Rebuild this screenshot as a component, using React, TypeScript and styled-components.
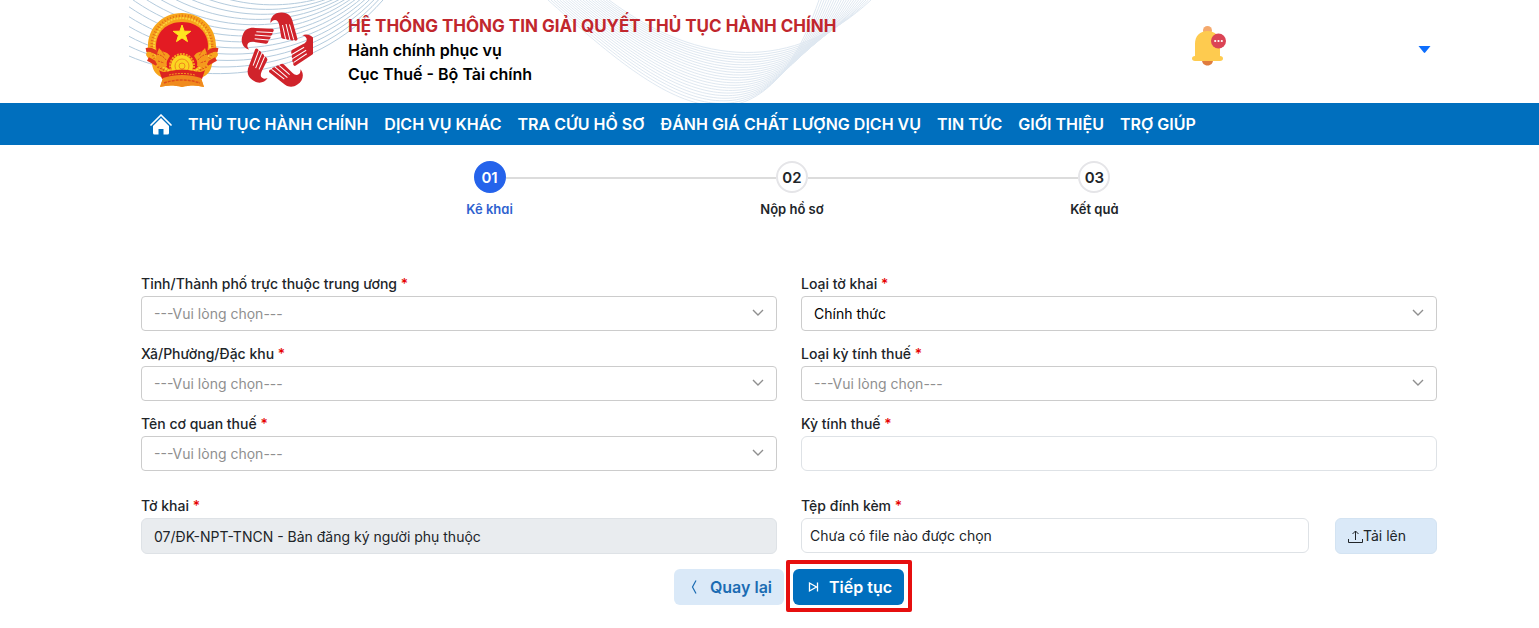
import React, { useId } from 'react';
import styled, { createGlobalStyle, css } from 'styled-components';

const GlobalStyle = createGlobalStyle`
  *, *::before, *::after { box-sizing: border-box; }
  body {
    margin: 0;
    background: #fff;
    color: #212529;
    font-family: Inter, "Noto Sans", sans-serif;
    font-size: 14px;
    line-height: 24px;
  }
  button, input, select { font: inherit; color: inherit; }
`;

const Container = styled.div`
  width: 100%;
  max-width: 1449px;
  padding: 0 12px 0 141px;
`;

const Header = styled.header`
  position: relative;
  overflow: hidden;
`;

const Pattern = styled.svg`
  position: absolute;
  top: 0;
  left: 129px;
  pointer-events: none;
`;

const HeaderRow = styled(Container)`
  position: relative;
  display: flex;
  align-items: center;
  padding-top: 12px;
  padding-bottom: 15px;
  padding-left: 145px;
`;

const Logos = styled.div`
  display: flex;
  align-items: center;
  gap: 22px;
  margin-right: 35px;
`;

const Titles = styled.div`
  flex: 1;
  font-size: 16px;
  font-weight: 600;
  color: #000;
`;

const SiteName = styled.h1`
  margin: 0;
  font-size: 17px;
  line-height: 24px;
  font-weight: 700;
  color: #c1272d;
`;

const TitleLine = styled.p`
  margin: 0;
`;

const IconButton = styled.button`
  display: flex;
  padding: 0;
  border: 0;
  background: none;
  cursor: pointer;
`;

const UserTools = styled.div`
  display: flex;
  align-items: center;
  gap: 191px;
  padding-right: 6px;
`;

const BellButton = styled(IconButton)`
  padding-bottom: 8px;
`;

const Nav = styled.nav`
  background: #006fbe;
  color: #fff;
`;

const NavList = styled(Container).attrs({ as: 'ul' })`
  display: flex;
  align-items: center;
  gap: 16px;
  height: 42px;
  margin: 0;
  padding-left: 150px;
  list-style: none;
`;

const NavLink = styled.a`
  display: flex;
  color: inherit;
  font-size: 16px;
  font-weight: 600;
  white-space: nowrap;
  text-decoration: none;
`;

const Steps = styled.ol`
  display: grid;
  grid-template-columns: repeat(3, 1fr);
  width: 70%;
  margin: 0 0 0 calc(15% + 3px);
  padding: 16px 0 0;
  list-style: none;
`;

const Step = styled.li<{ $active?: boolean }>`
  position: relative;
  display: flex;
  flex-direction: column;
  align-items: center;
  gap: 4px;
  font-size: 13px;
  font-weight: 600;
  font-feature-settings: 'cv11';
  color: ${p => (p.$active ? '#2f62cf' : '#212529')};

  &:not(:first-child)::before {
    content: '';
    position: absolute;
    top: 16px;
    right: calc(50% + 16px);
    width: calc(100% - 32px);
    height: 2px;
    background: #dcdcdc;
  }
`;

const StepNumber = styled.span<{ $active?: boolean }>`
  display: flex;
  align-items: center;
  justify-content: center;
  width: 32px;
  height: 32px;
  padding-top: 2px;
  border: 2px solid ${p => (p.$active ? '#2563eb' : '#e5e5e8')};
  border-radius: 50%;
  background: ${p => (p.$active ? '#2563eb' : '#fff')};
  color: ${p => (p.$active ? '#fff' : '#212529')};
  font-size: 15px;
  font-weight: 600;
`;

const Form = styled.form`
  padding-top: 51px;
`;

const FormGrid = styled.div<{ $last?: boolean }>`
  display: grid;
  grid-template-columns: 1fr 1fr;
  gap: 11px 24px;
  ${p => p.$last && css`margin-top: 23px;`}
`;

const Label = styled.label`
  display: block;
  font-weight: 500;
`;

const Required = styled.span`
  color: #e60000;
`;

const control = css`
  display: block;
  width: 100%;
  height: 35px;
  border: 1px solid #ccc;
  border-radius: 4px;
  background: #fff;
  outline-offset: 1px;
`;

const SelectBox = styled.div`
  position: relative;
`;

const Select = styled.select<{ $placeholder?: boolean }>`
  ${control}
  appearance: none;
  padding: 0 32px 0 12px;
  color: ${p => (p.$placeholder ? '#8f8f8f' : '#000')};
`;

const Chevron = styled.svg`
  position: absolute;
  top: 11px;
  right: 13px;
  pointer-events: none;
`;

const TextInput = styled.input<{ $file?: boolean }>`
  ${control}
  padding: 0 ${p => (p.$file ? 8 : 12)}px;
  border-color: #dee2e6;
  border-radius: 6px;
  &:disabled {
    height: 36px;
    background: #e9ecef;
    color: #212529;
    opacity: 1;
  }
`;

const FileRow = styled.div`
  display: flex;
  gap: 26px;
`;

const UploadButton = styled.button`
  flex: 0 0 102px;
  display: flex;
  align-items: center;
  height: 36px;
  padding: 0 12px;
  border: 1px solid #d3e3f2;
  border-radius: 6px;
  background: #dae9f8;
  cursor: pointer;
`;

const Actions = styled.div`
  display: flex;
  justify-content: center;
  gap: 9px;
  padding: 15px 0 23px;
`;

const ActionButton = styled.button<{ $primary?: boolean }>`
  display: flex;
  align-items: center;
  gap: 8px;
  height: 36px;
  padding: 0 12px;
  border: 0;
  border-radius: 6px;
  background: ${p => (p.$primary ? '#006fbe' : '#dae9f8')};
  color: ${p => (p.$primary ? '#fff' : '#1b6cb3')};
  font-size: 16px;
  font-weight: 600;
  white-space: nowrap;
  cursor: pointer;
`;

const Highlight = styled.div`
  position: relative;
  &::after {
    content: '';
    position: absolute;
    inset: -9px -8px -7px -7px;
    border: 4px solid #e60f0f;
    border-radius: 2px;
    pointer-events: none;
  }
`;

type Curve = number[];

function blend(a: Curve, b: Curve, count: number): string[] {
  return Array.from({ length: count }, (_, i) => {
    const t = i / (count - 1);
    const p = a.map((v, k) => Math.round((v + (b[k] - v) * t) * 10) / 10);
    return `M${p[0]} ${p[1]}C${p[2]} ${p[3]} ${p[4]} ${p[5]} ${p[6]} ${p[7]}`;
  });
}

const arcs = blend([0, 56, 70, 86, 180, 84, 254, 0], [0, -62, 70, 12, 150, 14, 205, -6], 13);
const wave = blend([419, 0, 521, 90, 626, 185, 690, 0], [480, 0, 571, 68, 665, 72, 742, 0], 22);

function HeaderPattern() {
  return (
    <Pattern width="780" height="103" fill="none" aria-hidden="true">
      <g stroke="#b4cbdd">
        {arcs.map(d => <path key={d} d={d} />)}
      </g>
      <g stroke="#dfe8f1">
        {wave.map(d => <path key={d} d={d} />)}
      </g>
    </Pattern>
  );
}

function Emblem() {
  return (
    <svg width="74" height="76" viewBox="0 0 74 76" role="img" aria-label="Quốc huy">
      <path d="M37 1C16 1 3 17 3 34L1 43l6 9c1 7 4 11 11 14l-3 9c7-2 14-2 22 0 8-2 15-2 22 0l-3-9c7-3 10-7 11-14l6-9-2-9C71 16 57 1 37 1Z" fill="#f7a51c" />
      <circle cx="37" cy="34" r="30" fill="none" stroke="#e2701a" strokeWidth="3" strokeDasharray="1 2" />
      <circle cx="37" cy="34" r="28" fill="none" stroke="#fbd13a" strokeWidth="2" strokeDasharray="2 1" />
      <path d="M37 10C21 10 11 21 11 34c0 10 7 19 13 23h26c6-4 13-13 13-23C63 21 53 10 37 10Z" fill="#e31b23" />
      <path d="m37 13 2.200 6.200 6.600.1-5.300 4 2 6.300-5.500-3.700-5.500 3.700 2-6.300-5.300-4 6.600-.1Z" fill="#ffe51f" stroke="#ffe51f" />
      <path d="M1 38c5-1 9 1 13 5M73 38c-5-1-9 1-13 5M3 47l9 5M71 47l-9 5" stroke="#e0321f" strokeWidth="4" fill="none" />
      <path d="M14 36c3 5 8 3 11 8-2 3-4 5-3 10-6 3-10 0-12-6M60 36c-3 5-8 3-11 8 2 3 4 5 3 10 6 3 10 0 12-6" fill="#f59a1d" />
      <path d="M12 42c4 1 7 3 9 6M13 49l6 2M62 42c-4 1-7 3-9 6M61 49l-6 2M17 39l3 5M57 39l-3 5M12 55l7 3M62 55l-7 3" stroke="#df4b1c" fill="none" strokeDasharray="2 1" />
      <circle cx="37" cy="54" r="11" fill="#fbd521" />
      <circle cx="37" cy="54" r="7" fill="none" stroke="#f08a1d" />
      <circle cx="37" cy="54" r="3" fill="none" stroke="#f08a1d" />
      <circle cx="37" cy="54" r="12" fill="none" stroke="#f7a51c" strokeWidth="2" strokeDasharray="2 1" />
      <path d="M14 58c4 3 7 2 11 1 8-2 16-2 24 0 4 1 7 2 11-1l-3 9c-13-4-27-4-40 0Z" fill="#dc2420" />
      <path d="M24 63c8-2 18-2 26 0" stroke="#f59a1d" strokeDasharray="2 1" fill="none" />
      <path d="M18 66c12-4 26-4 38 0l3 9c-7-2-14-2-22 0-8-2-15-2-22 0Z" fill="#f08a1d" />
      <path d="M19 71c11-4 25-4 36 0" stroke="#e0521c" strokeWidth="1.500" strokeDasharray="3 1" fill="none" />
    </svg>
  );
}

function HandsLogo() {
  return (
    <svg width="72" height="76" viewBox="-37 -39 72 76" role="img" aria-label="Hành chính phục vụ">
      {[0, 72, 144, 216, 288].map(angle => (
        <g key={angle} transform={`rotate(${angle})`}>
          <path
            d="M-7.500-28C-8-34-3-39 4-38.500 10-38.500 13.500-35 14.800-29L19.500-12C19.500-10 16.500-9.800 16-11.500 15-10 12.500-10.300 12-12 11-10.800 8.500-11 8-12.800 7-11.500 3.500-12 3.200-14L1.200-26C.5-29.500-1-31-3-31-5-31-6-30-7.500-28Z"
            fill="#d0232b"
          />
          <path d="m4.500-26 3 13.500M8-27l3.800 15.500M11.500-26.500l4.200 15" stroke="#fff" fill="none" />
        </g>
      ))}
    </svg>
  );
}

function BellIcon() {
  return (
    <svg width="36" height="40" viewBox="0 0 36 40" aria-hidden="true">
      <circle cx="16.500" cy="4.500" r="4.500" fill="#f5a96c" />
      <path d="M11 34h11c0 3-2 5.500-5.500 5.500S11 37 11 34Z" fill="#e07c3e" />
      <path d="M4 30V18C4 10 9 5 16.500 5S29 10 29 18v12c4 0 4 5 0 5H4c-4 0-4-5 0-5Z" fill="#fecb4f" />
      <circle cx="27.500" cy="15" r="7.500" fill="#db4455" />
      <g fill="#fff">
        <circle cx="24.200" cy="15" r="1.100" />
        <circle cx="27.500" cy="15" r="1.100" />
        <circle cx="30.800" cy="15" r="1.100" />
      </g>
    </svg>
  );
}

function HomeIcon() {
  return (
    <svg width="22" height="22" viewBox="0 0 22 22" aria-hidden="true">
      <path d="m1 12 10-10 10 10" fill="none" stroke="#fff" strokeWidth="1.700" strokeLinecap="round" strokeLinejoin="round" />
      <path d="m11 5 8 8v7a1.500 1.500 0 0 1-1.500 1.500H13.500V16h-5v5.500H4.500A1.500 1.500 0 0 1 3 20v-7Z" fill="#fff" />
    </svg>
  );
}

function LabelText({ id, children }: { id: string; children: React.ReactNode }) {
  return <Label htmlFor={id}>{children} <Required>*</Required></Label>;
}

function SelectField({ label, value }: { label: string; value?: string }) {
  const id = useId();
  return (
    <div>
      <LabelText id={id}>{label}</LabelText>
      <SelectBox>
        <Select id={id} $placeholder={!value} required>
          <option>{value ?? '---Vui lòng chọn---'}</option>
        </Select>
        <Chevron width="12" height="12" viewBox="0 0 12 12" fill="none" stroke="#8f8f8f" strokeWidth="1.400">
          <path d="m1 3 5 5 5-5" />
        </Chevron>
      </SelectBox>
    </div>
  );
}

const menu = [
  'THỦ TỤC HÀNH CHÍNH',
  'DỊCH VỤ KHÁC',
  'TRA CỨU HỒ SƠ',
  'ĐÁNH GIÁ CHẤT LƯỢNG DỊCH VỤ',
  'TIN TỨC',
  'GIỚI THIỆU',
  'TRỢ GIÚP',
];

const steps = ['Kê khai', 'Nộp hồ sơ', 'Kết quả'];

export default function App() {
  return (
    <>
      <GlobalStyle />
      <Header>
        <HeaderPattern />
        <HeaderRow>
          <Logos>
            <Emblem />
            <HandsLogo />
          </Logos>
          <Titles>
            <SiteName>HỆ THỐNG THÔNG TIN GIẢI QUYẾT THỦ TỤC HÀNH CHÍNH</SiteName>
            <TitleLine>Hành chính phục vụ</TitleLine>
            <TitleLine>Cục Thuế - Bộ Tài chính</TitleLine>
          </Titles>
          <UserTools>
            <BellButton type="button" aria-label="Thông báo"><BellIcon /></BellButton>
            <IconButton type="button" aria-label="Tài khoản">
              <svg width="13" height="8" viewBox="0 0 13 8" aria-hidden="true">
                <path d="M.5 0h12L7.200 6.500q-.7.800-1.400 0Z" fill="#0d6efd" />
              </svg>
            </IconButton>
          </UserTools>
        </HeaderRow>
      </Header>
      <Nav>
        <NavList>
          <li><NavLink href="#" aria-label="Trang chủ"><HomeIcon /></NavLink></li>
          {menu.map(item => <li key={item}><NavLink href="#">{item}</NavLink></li>)}
        </NavList>
      </Nav>
      <Container as="main">
        <Steps>
          {steps.map((name, i) => (
            <Step key={name} $active={i === 0}>
              <StepNumber $active={i === 0}>{`0${i + 1}`}</StepNumber>
              {name}
            </Step>
          ))}
        </Steps>
        <Form onSubmit={e => e.preventDefault()}>
          <FormGrid>
            <SelectField label="Tỉnh/Thành phố trực thuộc trung ương" />
            <SelectField label="Loại tờ khai" value="Chính thức" />
            <SelectField label="Xã/Phường/Đặc khu" />
            <SelectField label="Loại kỳ tính thuế" />
            <SelectField label="Tên cơ quan thuế" />
            <div>
              <LabelText id="period">Kỳ tính thuế</LabelText>
              <TextInput id="period" type="text" />
            </div>
          </FormGrid>
          <FormGrid $last>
            <div>
              <LabelText id="declaration">Tờ khai</LabelText>
              <TextInput id="declaration" type="text" disabled defaultValue="07/ĐK-NPT-TNCN - Bản đăng ký người phụ thuộc" />
            </div>
            <div>
              <LabelText id="attachment">Tệp đính kèm</LabelText>
              <FileRow>
                <TextInput id="attachment" type="text" readOnly $file defaultValue="Chưa có file nào được chọn" />
                <UploadButton type="button">
                  <svg width="15" height="15" viewBox="0 0 15 15" fill="none" stroke="#212529" aria-hidden="true">
                    <path d="M.5 10v3.500h14V10M7.500 11V2M4.500 5l3-3 3 3" />
                  </svg>
                  Tải lên
                </UploadButton>
              </FileRow>
            </div>
          </FormGrid>
          <Actions>
            <ActionButton type="button">
              <svg width="16" height="16" viewBox="0 0 16 16" fill="none" stroke="currentColor" strokeWidth="1.200" aria-hidden="true">
                <path d="m10 1.500-3.500 6.500 3.500 6.500" />
              </svg>
              Quay lại
            </ActionButton>
            <Highlight>
              <ActionButton type="submit" $primary>
                <svg width="16" height="16" viewBox="0 0 16 16" fill="none" stroke="currentColor" strokeWidth="1.300" aria-hidden="true">
                  <path d="m4.500 4 7 4-7 4ZM12.500 3.500v9" />
                </svg>
                Tiếp tục
              </ActionButton>
            </Highlight>
          </Actions>
        </Form>
      </Container>
    </>
  );
}
